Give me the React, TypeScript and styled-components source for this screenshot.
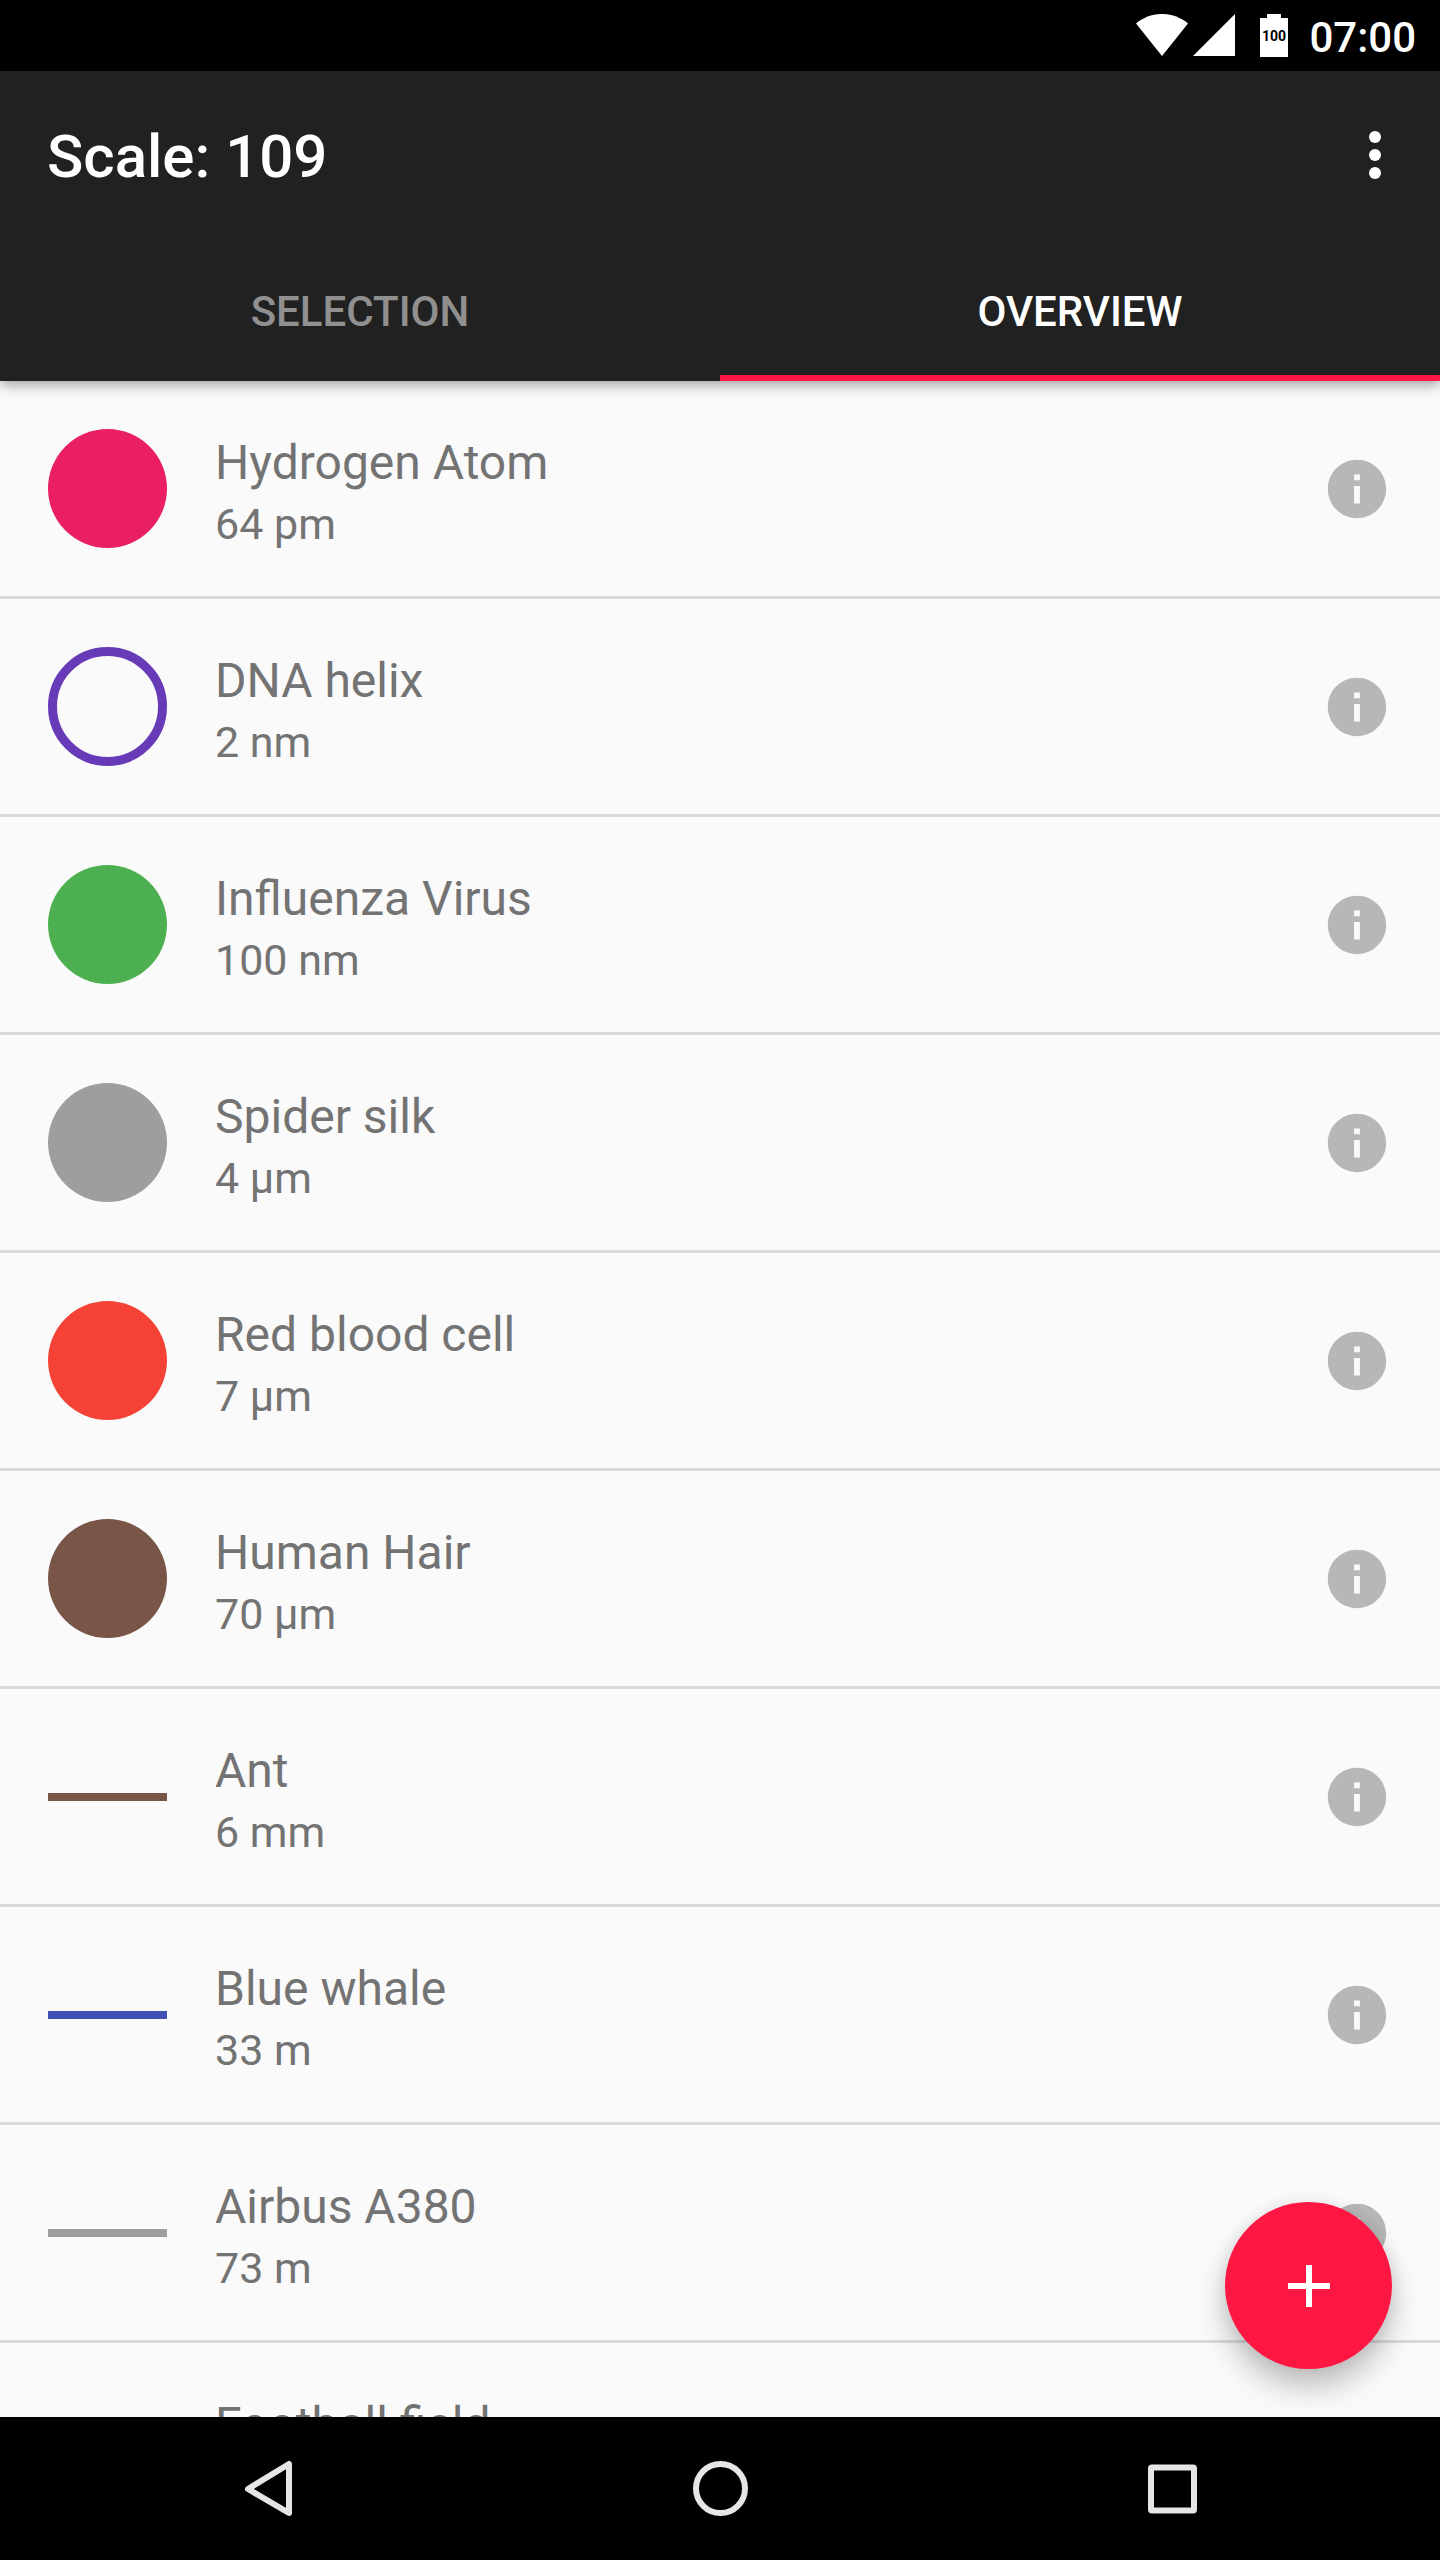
import React, { useState } from "react";
import styled, { createGlobalStyle } from "styled-components";

const GlobalStyle = createGlobalStyle`
  *, *::before, *::after { box-sizing: border-box; }
  body { margin: 0; background: #000; font-family: Roboto, "Liberation Sans", sans-serif; }
  button { margin: 0; padding: 0; border: 0; background: none; font: inherit; color: inherit; cursor: pointer; }
`;

const Screen = styled.div`
  display: flex;
  flex-direction: column;
  height: 100vh;
  overflow: hidden;
  background: #fafafa;
`;

const StatusBar = styled.header`
  flex: none;
  display: flex;
  align-items: center;
  justify-content: flex-end;
  height: 71px;
  padding: 0 24px;
  background: #000;
  color: #fff;
`;

const StatusIcons = styled.svg`
  display: block;
  width: 152px;
  height: 43px;
  margin-right: 21px;
`;

const BatteryText = styled.text`
  font-family: Roboto, sans-serif;
  font-size: 14px;
  font-weight: 700;
`;

const Clock = styled.time`
  font-size: 42px;
  font-weight: 500;
  line-height: 48px;
  padding-top: 4px;
`;

const AppBar = styled.div`
  position: relative;
  z-index: 1;
  flex: none;
  background: #212121;
  color: #fff;
  box-shadow: 0 4px 12px rgba(0, 0, 0, 0.36);
`;

const Toolbar = styled.div`
  display: flex;
  align-items: center;
  justify-content: space-between;
  height: 167px;
  padding: 0 29px 0 47px;
`;

const Title = styled.h1`
  margin: 0;
  padding-top: 4px;
  font-size: 60px;
  font-weight: 500;
  line-height: 72px;
`;

const IconButton = styled.button`
  display: grid;
  place-items: center;
`;

const Icon = styled.svg<{ $size: number }>`
  display: block;
  width: ${(p) => p.$size}px;
  height: ${(p) => p.$size}px;
  fill: currentColor;
`;

const Tabs = styled.div`
  display: grid;
  grid-template-columns: 1fr 1fr;
  height: 143px;
`;

const Tab = styled.button<{ $active: boolean }>`
  && {
    padding-top: 10px;
    border-bottom: 6px solid ${(p) => (p.$active ? "#ff1744" : "transparent")};
    color: ${(p) => (p.$active ? "#fff" : "#909090")};
    font-size: 42px;
    font-weight: 500;
    text-transform: uppercase;
  }
`;

const List = styled.ul`
  flex: 1;
  min-height: 0;
  margin: 0;
  padding: 0;
  overflow-y: auto;
  scrollbar-width: none;
  list-style: none;
`;

const Row = styled.li`
  display: flex;
  align-items: center;
  gap: 48px;
  height: 218px;
  padding: 0 48px;
  border-bottom: 3px solid #dadada;
`;

type Shape = "disc" | "ring" | "line";

const Marker = styled.span<{ $shape: Shape; $color: string }>`
  flex: none;
  width: 119px;
  height: ${(p) => (p.$shape === "line" ? 8 : 119)}px;
  border: ${(p) => (p.$shape === "ring" ? `9px solid ${p.$color}` : "0")};
  border-radius: ${(p) => (p.$shape === "line" ? "0" : "50%")};
  background: ${(p) => (p.$shape === "ring" ? "transparent" : p.$color)};
`;

const Labels = styled.div`
  flex: 1;
  align-self: flex-start;
  min-width: 0;
  padding-top: 51px;
  color: #737373;
`;

const Name = styled.div`
  font-size: 48px;
  line-height: 62px;
`;

const Size = styled.div`
  font-size: 43px;
  line-height: 60px;
`;

const InfoButton = styled(IconButton)`
  && { color: #b7b7b7; }
`;

const Fab = styled.button`
  && {
    position: fixed;
    right: 48px;
    bottom: 191px;
    z-index: 2;
    display: grid;
    place-items: center;
    width: 167px;
    height: 167px;
    border-radius: 50%;
    background: #ff1744;
    color: #fff;
    box-shadow: 0 18px 30px rgba(0, 0, 0, 0.24), 0 0 18px rgba(0, 0, 0, 0.08);
  }
`;

const NavBar = styled.nav`
  position: relative;
  z-index: 1;
  flex: none;
  display: flex;
  align-items: center;
  justify-content: center;
  gap: 380px;
  height: 143px;
  background: #000;
  color: #e6e6e6;
`;

const NavIcon = styled.svg`
  display: block;
  width: 72px;
  height: 72px;
  fill: none;
  stroke: currentColor;
  stroke-width: 6;
  stroke-linejoin: round;
`;

interface Item {
  name: string;
  size?: string;
  shape: Shape;
  color: string;
}

const items: Item[] = [
  { name: "Hydrogen Atom", size: "64 pm", shape: "disc", color: "#e91e63" },
  { name: "DNA helix", size: "2 nm", shape: "ring", color: "#673ab7" },
  { name: "Influenza Virus", size: "100 nm", shape: "disc", color: "#4caf50" },
  { name: "Spider silk", size: "4 µm", shape: "disc", color: "#9e9e9e" },
  { name: "Red blood cell", size: "7 µm", shape: "disc", color: "#f44336" },
  { name: "Human Hair", size: "70 µm", shape: "disc", color: "#795548" },
  { name: "Ant", size: "6 mm", shape: "line", color: "#795548" },
  { name: "Blue whale", size: "33 m", shape: "line", color: "#3f51b5" },
  { name: "Airbus A380", size: "73 m", shape: "line", color: "#9e9e9e" },
  { name: "Football field", shape: "line", color: "#4caf50" },
];

const tabs = ["Selection", "Overview"];

export default function App() {
  const [active, setActive] = useState("Overview");
  return (
    <Screen>
      <GlobalStyle />
      <StatusBar>
        <StatusIcons viewBox="0 0 152 43" role="img" aria-label="Wi-Fi, signal, battery full">
          <path d="M0 9.5C15-3.2 37-3.2 52 9.5L26 42Z" fill="#fff" />
          <path d="M99 0V42H57Z" fill="#fff" />
          <path d="M131 0h14v4h7v39h-28V4h7Z" fill="#fff" />
          <BatteryText x="138" y="27" textAnchor="middle" fill="#000">100</BatteryText>
        </StatusIcons>
        <Clock>07:00</Clock>
      </StatusBar>
      <AppBar>
        <Toolbar>
          <Title>Scale: 109</Title>
          <IconButton aria-label="More options">
            <Icon $size={72} viewBox="0 0 24 24">
              <circle cx="12" cy="6" r="2" />
              <circle cx="12" cy="12" r="2" />
              <circle cx="12" cy="18" r="2" />
            </Icon>
          </IconButton>
        </Toolbar>
        <Tabs role="tablist">
          {tabs.map((t) => (
            <Tab key={t} role="tab" aria-selected={t === active} $active={t === active} onClick={() => setActive(t)}>
              {t}
            </Tab>
          ))}
        </Tabs>
      </AppBar>
      <List>
        {items.map((item) => (
          <Row key={item.name}>
            <Marker $shape={item.shape} $color={item.color} />
            <Labels>
              <Name>{item.name}</Name>
              {item.size && <Size>{item.size}</Size>}
            </Labels>
            <InfoButton aria-label={`About ${item.name}`}>
              <Icon $size={70} viewBox="0 0 24 24">
                <path d="M12 2C6.480 2 2 6.480 2 12s4.480 10 10 10 10-4.480 10-10S17.520 2 12 2zm1 15h-2v-6h2v6zm0-8h-2V7h2v2z" />
              </Icon>
            </InfoButton>
          </Row>
        ))}
      </List>
      <Fab aria-label="Add object">
        <Icon $size={72} viewBox="0 0 24 24">
          <path d="M19 13h-6v6h-2v-6H5v-2h6V5h2v6h6v2z" />
        </Icon>
      </Fab>
      <NavBar>
        <IconButton aria-label="Back">
          <NavIcon viewBox="0 0 72 72">
            <path d="M16 36L57 11V60Z" />
          </NavIcon>
        </IconButton>
        <IconButton aria-label="Home">
          <NavIcon viewBox="0 0 72 72">
            <circle cx="36.5" cy="35.5" r="24.5" />
          </NavIcon>
        </IconButton>
        <IconButton aria-label="Recent apps">
          <NavIcon viewBox="0 0 72 72">
            <rect x="15" y="14.5" width="43" height="43" rx="1" />
          </NavIcon>
        </IconButton>
      </NavBar>
    </Screen>
  );
}
